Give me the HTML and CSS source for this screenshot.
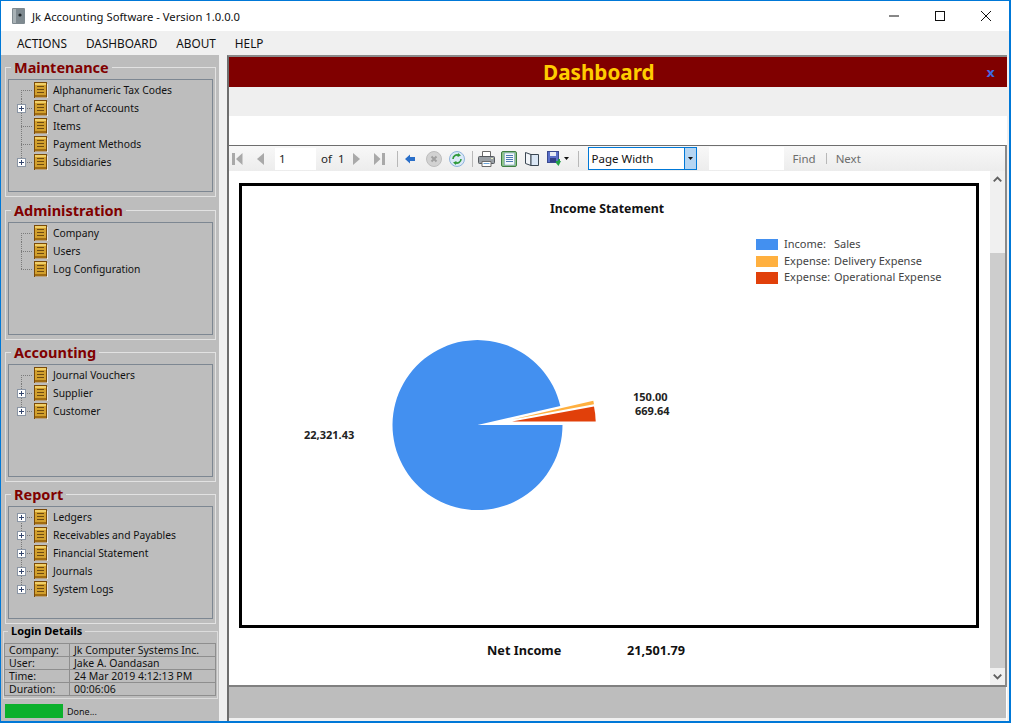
FILE: index.html
```html
<!DOCTYPE html>
<html lang="en">
<head>
    <meta charset="UTF-8">
    <meta name="viewport" content="width=device-width, initial-scale=1.0">
    <title>Jk Accounting Software</title>
    <link rel="stylesheet" href="styles.css">
</head>
<body>
    <svg class="defs" width="0" height="0">
        <symbol id="drawer" viewBox="0 0 14 16">
            <rect x="0.5" y="0.5" width="12" height="15" fill="#d2a02e" stroke="#7a4a08"/>
            <rect x="1" y="1" width="11" height="2" fill="#f0cf68"/>
            <rect x="1" y="13" width="11" height="2" fill="#a06c12"/>
            <path d="M3 4.500h7M3 7.500h7M3 10.500h7" stroke="#6e4a10" stroke-width="1.200"/>
            <path d="M13.500 2v14M1 15.700h13" stroke="#fff" stroke-width="0.600"/>
        </symbol>
    </svg>

    <div class="window">
        <div class="titlebar">
            <svg class="app-icon" width="14" height="16" viewBox="0 0 14 16">
                <rect width="13" height="16" rx="1" fill="#7f8a90"/>
                <rect x="1" y="1" width="3" height="14" fill="#a9b2b6"/>
                <circle cx="8" cy="7" r="1.600" fill="#1d2326"/>
            </svg>
            <span class="app-title">Jk Accounting Software - Version 1.0.0.0</span>
            <div class="win-buttons">
                <svg width="46" height="30" viewBox="0 0 46 30"><path d="M18 15h10" stroke="#111"/></svg>
                <svg width="46" height="30" viewBox="0 0 46 30"><rect x="18.500" y="10.500" width="9" height="9" fill="none" stroke="#111"/></svg>
                <svg width="46" height="30" viewBox="0 0 46 30"><path d="M18 10l10 10M28 10l-10 10" stroke="#111"/></svg>
            </div>
        </div>

        <nav class="menubar">
            <span>ACTIONS</span>
            <span>DASHBOARD</span>
            <span>ABOUT</span>
            <span>HELP</span>
        </nav>

        <div class="content">
            <aside class="sidebar">
                <fieldset class="group">
                    <legend>Maintenance</legend>
                    <ul class="tree">
                        <li class="first"><span class="gutter"></span><svg class="drawer"><use href="#drawer"/></svg>Alphanumeric Tax Codes</li>
                        <li><span class="gutter"><i class="plus"></i></span><svg class="drawer"><use href="#drawer"/></svg>Chart of Accounts</li>
                        <li><span class="gutter"></span><svg class="drawer"><use href="#drawer"/></svg>Items</li>
                        <li><span class="gutter"></span><svg class="drawer"><use href="#drawer"/></svg>Payment Methods</li>
                        <li class="last"><span class="gutter"><i class="plus"></i></span><svg class="drawer"><use href="#drawer"/></svg>Subsidiaries</li>
                    </ul>
                </fieldset>
                <fieldset class="group">
                    <legend>Administration</legend>
                    <ul class="tree">
                        <li class="first"><span class="gutter"></span><svg class="drawer"><use href="#drawer"/></svg>Company</li>
                        <li><span class="gutter"></span><svg class="drawer"><use href="#drawer"/></svg>Users</li>
                        <li class="last"><span class="gutter"></span><svg class="drawer"><use href="#drawer"/></svg>Log Configuration</li>
                    </ul>
                </fieldset>
                <fieldset class="group">
                    <legend>Accounting</legend>
                    <ul class="tree">
                        <li class="first"><span class="gutter"></span><svg class="drawer"><use href="#drawer"/></svg>Journal Vouchers</li>
                        <li><span class="gutter"><i class="plus"></i></span><svg class="drawer"><use href="#drawer"/></svg>Supplier</li>
                        <li class="last"><span class="gutter"><i class="plus"></i></span><svg class="drawer"><use href="#drawer"/></svg>Customer</li>
                    </ul>
                </fieldset>
                <fieldset class="group">
                    <legend>Report</legend>
                    <ul class="tree">
                        <li class="first"><span class="gutter"><i class="plus"></i></span><svg class="drawer"><use href="#drawer"/></svg>Ledgers</li>
                        <li><span class="gutter"><i class="plus"></i></span><svg class="drawer"><use href="#drawer"/></svg>Receivables and Payables</li>
                        <li><span class="gutter"><i class="plus"></i></span><svg class="drawer"><use href="#drawer"/></svg>Financial Statement</li>
                        <li><span class="gutter"><i class="plus"></i></span><svg class="drawer"><use href="#drawer"/></svg>Journals</li>
                        <li class="last"><span class="gutter"><i class="plus"></i></span><svg class="drawer"><use href="#drawer"/></svg>System Logs</li>
                    </ul>
                </fieldset>

                <fieldset class="login">
                    <legend>Login Details</legend>
                    <table>
                        <tr><td>Company:</td><td>Jk Computer Systems Inc.</td></tr>
                        <tr><td>User:</td><td>Jake A. Oandasan</td></tr>
                        <tr><td>Time:</td><td>24 Mar 2019 4:12:13 PM</td></tr>
                        <tr><td>Duration:</td><td>00:06:06</td></tr>
                    </table>
                </fieldset>

                <div class="progress">
                    <div class="progress-bar"></div>
                    <span>Done...</span>
                </div>
            </aside>

            <main class="main">
                <div class="dash-head">
                    <h1>Dashboard</h1>
                    <span class="dash-close">x</span>
                </div>
                <div class="dash-strip"></div>
                <div class="dash-gap"></div>

                <div class="viewer">
                    <div class="toolbar">
                        <svg class="t-first" width="11" height="14" viewBox="0 0 11 14"><path d="M0 1h3v12H0zM10.500 1v12L4 7z" fill="#a9a9a9"/></svg>
                        <svg class="t-prev" width="7" height="14" viewBox="0 0 7 14"><path d="M7 1v12L0 7z" fill="#a9a9a9"/></svg>
                        <span class="page-input">1</span>
                        <span class="page-of">of</span>
                        <span class="page-total">1</span>
                        <svg class="t-next" width="7" height="14" viewBox="0 0 7 14"><path d="M0 1v12L7 7z" fill="#a9a9a9"/></svg>
                        <svg class="t-last" width="11" height="14" viewBox="0 0 11 14"><path d="M0 1v12l6.500-6zM8 1h3v12H8z" fill="#a9a9a9"/></svg>
                        <span class="sep s1"></span>
                        <svg class="t-back" width="10" height="10" viewBox="0 0 10 10"><path d="M0 5l5-4.500V3h5v4H5v2.500z" fill="#2a6fc9"/></svg>
                        <svg class="t-stop" width="16" height="16" viewBox="0 0 16 16"><circle cx="8" cy="8" r="7.500" fill="#d2d2d2" stroke="#bdbdbd"/><path d="M5.500 5.500l5 5M10.500 5.500l-5 5" stroke="#a0a0a0" stroke-width="2"/></svg>
                        <svg class="t-refresh" width="16" height="16" viewBox="0 0 16 16"><circle cx="8" cy="8" r="7.500" fill="#dbe9f8" stroke="#8fb3dc"/><path d="M4 8a4 4 0 0 1 6-3.500" fill="none" stroke="#2f9a3a" stroke-width="1.600"/><path d="M9 2l3 2.500-3.500 1.500z" fill="#2f9a3a"/><path d="M12 8a4 4 0 0 1-6 3.500" fill="none" stroke="#2f9a3a" stroke-width="1.600"/><path d="M7 14l-3-2.500 3.500-1.500z" fill="#2f9a3a"/></svg>
                        <span class="sep s2"></span>
                        <svg class="t-print" width="17" height="16" viewBox="0 0 17 16"><path d="M4.500.5h8v5h-8z" fill="#fff" stroke="#6b6b6b"/><rect x=".5" y="5.500" width="16" height="7" rx="1" fill="#9aa0a6" stroke="#55595e"/><path d="M4 10.500h9v5H4z" fill="#fff" stroke="#6b6b6b"/><path d="M5.500 12.500h6" stroke="#6aa4d8"/><rect x="13" y="7" width="2" height="1" fill="#e8f0c0"/></svg>
                        <svg class="t-layout" width="16" height="16" viewBox="0 0 16 16"><rect x=".5" y=".5" width="15" height="15" rx="1.500" fill="#8fc48c" stroke="#3f7f42"/><rect x="3.500" y="2" width="10" height="12" fill="#f4f8fc" stroke="#7d9fc0" stroke-width=".6"/><path d="M5 4.500h7M5 6.500h7M5 8.500h7M5 10.500h7" stroke="#4d79b3"/></svg>
                        <svg class="t-book" width="15" height="14" viewBox="0 0 15 14"><path d="M7 2.500L1.500.5v11L7 13.500z" fill="#f2f5f9" stroke="#3a4652"/><path d="M7 2.500h7.500v11H7z" fill="#dbe7f5" stroke="#3a4652"/></svg>
                        <svg class="t-save" width="14" height="16" viewBox="0 0 14 16"><rect x=".5" y=".5" width="11" height="11" fill="#5a6fc9" stroke="#3a4a90"/><rect x="3" y="1" width="6" height="4" fill="#e8ecf5"/><rect x="3" y="7" width="6" height="4" fill="#323f86"/><path d="M9 10h2V8h2v2h1l-2.500 5L9 12z" fill="#22a045"/></svg>
                        <svg class="t-caret" width="5" height="3" viewBox="0 0 5 3"><path d="M0 0h5L2.500 3z" fill="#111"/></svg>
                        <span class="sep s3"></span>
                        <div class="combo">
                            <span class="combo-text">Page Width</span>
                            <span class="combo-btn"><svg width="5" height="3" viewBox="0 0 5 3"><path d="M0 0h5L2.500 3z" fill="#111"/></svg></span>
                        </div>
                        <span class="find-input"></span>
                        <span class="find-link">Find</span>
                        <span class="sep s4"></span>
                        <span class="find-link">Next</span>
                    </div>

                    <div class="report-area">
                        <div class="report-page">
                            <div class="report-box">
                                <svg class="chart" width="734" height="439" viewBox="242 186 734 439">
                                    <text x="607" y="213" class="c-title" text-anchor="middle">Income Statement</text>

                                    <rect x="756" y="239" width="22" height="11" fill="#4390f0"/>
                                    <rect x="756" y="256" width="22" height="11" fill="#ffb03f"/>
                                    <rect x="756" y="272" width="22" height="12" fill="#e1400a"/>
                                    <text x="784" y="248" class="c-legend">Income:</text>
                                    <text x="834" y="248" class="c-legend">Sales</text>
                                    <text x="784" y="265" class="c-legend">Expense:</text>
                                    <text x="834" y="265" class="c-legend">Delivery Expense</text>
                                    <text x="784" y="281" class="c-legend">Expense:</text>
                                    <text x="834" y="281" class="c-legend">Operational Expense</text>

                                    <path d="M477.500 425H562.500A85 85 0 1 1 560.300 405.900Z" fill="#4390f0"/>
                                    <path d="M512 419.500L594 404.200L593.300 400.800Z" fill="#ffb03f"/>
                                    <path d="M512 421.500H595.700A83 83 0 0 0 594 406.500Z" fill="#e1400a"/>

                                    <text x="304" y="439" class="c-value">22,321.43</text>
                                    <text x="633" y="401" class="c-value">150.00</text>
                                    <text x="635" y="415" class="c-value">669.64</text>
                                </svg>
                            </div>
                            <div class="net-income">
                                <span class="net-label">Net Income</span>
                                <span class="net-value">21,501.79</span>
                            </div>
                        </div>
                        <div class="scrollbar">
                            <svg class="scroll-arrow" width="15" height="17" viewBox="0 0 16 17"><path d="M4 10.500l4-4 4 4" fill="none" stroke="#606060" stroke-width="2"/></svg>
                            <div class="scroll-space"></div>
                            <div class="scroll-thumb"></div>
                            <svg class="scroll-arrow" width="15" height="17" viewBox="0 0 16 17"><path d="M4 6.500l4 4 4-4" fill="none" stroke="#606060" stroke-width="2"/></svg>
                        </div>
                    </div>
                </div>

                <div class="statusbar"></div>
            </main>
        </div>
    </div>
</body>
</html>
```

FILE: styles.css
```css
* {
    box-sizing: border-box;
}
html, body {
    margin: 0;
    padding: 0;
    height: 100%;
    overflow: hidden;
}
body {
    font-family: "Noto Sans", "Liberation Sans", sans-serif;
    font-size: 10.3px;
    color: #111;
    background-color: #f0f0f0;
}
.defs {
    display: block;
    height: 0;
}
.window {
    display: flex;
    flex-direction: column;
    height: 723px;
    border: 1px solid #0078d7;
    border-width: 1px 2px 2px 1px;
    background-color: #f0f0f0;
}

/* title bar */
.titlebar {
    display: flex;
    align-items: center;
    height: 30px;
    padding-left: 11px;
    background-color: #fff;
}
.app-icon {
    margin-right: 6px;
}
.app-title {
    font-size: 11.25px;
}
.win-buttons {
    display: flex;
    margin-left: auto;
}
.menubar {
    display: flex;
    gap: 19px;
    align-items: center;
    height: 24px;
    padding-left: 16px;
    font-size: 11.8px;
}

.content {
    flex: 1;
    display: flex;
    min-height: 0;
}

/* left side */
.sidebar {
    width: 218px;
    padding-top: 2px;
    background-color: #bdbdbd;
}
.group {
    height: 140px;
    margin: 0 3px 2px 4px;
    padding: 2px 2px 0;
    border: 1px solid #e2e2e2;
}
.group:first-child {
    margin-bottom: 3px;
}
.group legend {
    margin-left: 3px;
    padding: 0 3px;
    height: 20px;
    font-size: 14.5px;
    line-height: 20px;
    font-weight: bold;
    color: #800000;
}
.tree {
    list-style: none;
    height: 113px;
    margin: 0;
    padding: 1px 0 0 0;
    border: 1px solid #7d8792;
}
.tree li {
    display: flex;
    align-items: center;
    height: 18px;
}
.gutter {
    display: flex;
    align-items: center;
    justify-content: center;
    width: 25px;
    height: 18px;
    padding: 0 4px;
    background-image: repeating-linear-gradient(#7a7a7a 0 1px, transparent 1px 2px), repeating-linear-gradient(90deg, #7a7a7a 0 1px, transparent 1px 2px);
    background-size: 1px 18px, 12px 1px;
    background-repeat: no-repeat;
    background-position: 12px 0, 12px 9px;
}
.first .gutter {
    background-size: 1px 9px, 12px 1px;
    background-position: 12px 9px, 12px 9px;
}
.last .gutter {
    background-size: 1px 9px, 12px 1px;
    background-position: 12px 0, 12px 9px;
}
.plus {
    display: block;
    width: 9px;
    height: 9px;
    border: 1px solid #8b96a5;
    background: linear-gradient(#34466e, #34466e) center / 5px 1px no-repeat, linear-gradient(#34466e, #34466e) center / 1px 5px no-repeat, #fff;
}
.drawer {
    width: 14px;
    height: 16px;
    margin-right: 5px;
}

.login {
    width: 215px;
    height: 75px;
    margin: -2px 0 0 2px;
    padding: 5px 0 0 0;
    border: 1px solid #dcdcdc;
}
.login legend {
    margin-left: 4px;
    padding: 0 3px;
    height: 14px;
    font-size: 11px;
    line-height: 14px;
    font-weight: bold;
    color: #000;
}
.login table {
    width: 212px;
    border-collapse: collapse;
    border: 1px solid #8e8e8e;
    font-size: 10.5px;
}
.login td {
    height: 13px;
    padding: 0 0 0 4px;
    border: 1px solid #8e8e8e;
    line-height: 11px;
}
.login td:first-child {
    width: 65px;
}
.progress {
    display: flex;
    align-items: center;
    gap: 4px;
    margin: 5px 0 0 4px;
    font-size: 9px;
}
.progress-bar {
    width: 58px;
    height: 14px;
    background-color: #0bb02c;
}

/* right side */
.main {
    flex: 1;
    display: flex;
    flex-direction: column;
    margin-left: 8px;
    margin-right: 2px;
    border-top: 2px solid #8a8a8a;
    border-left: 2px solid #6e6e6e;
    background-color: #fff;
}
.dash-head {
    display: flex;
    align-items: center;
    justify-content: space-between;
    height: 30px;
    padding: 0 12px 0 314px;
    background-color: #800000;
}
.dash-head h1 {
    margin: 0;
    font-size: 20.7px;
    color: #ffcc00;
}
.dash-close {
    font-family: "DejaVu Sans", sans-serif;
    font-size: 13px;
    font-weight: bold;
    color: #4169e1;
}
.dash-strip {
    height: 29px;
    background-color: #efefef;
}
.dash-gap {
    height: 29px;
    background-color: #fff;
}
.viewer {
    flex: 1;
    display: flex;
    flex-direction: column;
    min-height: 0;
    border-top: 1px solid #6e6e6e;
    border-right: 2px solid #8a8a8a;
    border-bottom: 2px solid #808080;
}
.toolbar {
    display: flex;
    align-items: center;
    flex: none;
    height: 25px;
    padding-left: 3px;
    background: linear-gradient(#f8f8f8, #ececec);
    font-size: 11.5px;
}
.t-prev { margin-left: 14px; }
.page-input {
    width: 41px;
    height: 22px;
    margin-left: 11px;
    padding-left: 4px;
    line-height: 21px;
    background-color: #fff;
    color: #222;
}
.page-of { margin-left: 5px; color: #222; }
.page-total { margin-left: 6px; color: #222; }
.t-next { margin-left: 8px; }
.t-last { margin-left: 14px; }
.sep {
    width: 1px;
    height: 16px;
    background-color: #b8b8b8;
}
.s1 { margin-left: 12px; }
.t-back { margin-left: 7px; }
.t-stop { margin-left: 11px; }
.t-refresh { margin-left: 7px; }
.s2 { margin-left: 7px; }
.t-print { margin-left: 5px; }
.t-layout { margin-left: 6px; }
.t-book { margin-left: 7px; }
.t-save { margin-left: 8px; }
.t-caret { margin-left: 3px; }
.s3 { margin-left: 9px; }
.combo {
    display: flex;
    width: 109px;
    height: 23px;
    margin-left: 9px;
    border: 1px solid #0078d7;
    background-color: #fff;
}
.combo-text {
    flex: 1;
    padding-left: 3px;
    line-height: 21px;
    color: #111;
}
.combo-btn {
    display: flex;
    align-items: center;
    justify-content: center;
    width: 12px;
    border-left: 1px solid #0078d7;
    background-color: #b5d5f2;
}
.find-input {
    width: 75px;
    height: 23px;
    margin-left: 12px;
    background-color: #fff;
}
.find-link {
    color: #6d6d6d;
}
.find-input + .find-link { margin-left: 9px; }
.s4 { height: 11px; margin: 0 9px 0 10px; }

.report-area {
    flex: 1;
    display: flex;
    min-height: 0;
    background-color: #fff;
}
.report-page {
    flex: 1;
    padding: 12px 11px 0 10px;
}
.report-box {
    height: 445px;
    border: 3px solid #000;
}
.chart {
    display: block;
}
.chart text {
    font-family: "Noto Sans", "Liberation Sans", sans-serif;
}
.c-title {
    font-size: 12.3px;
    font-weight: bold;
    fill: #111;
}
.c-legend {
    font-size: 11px;
    fill: #444;
}
.c-value {
    font-size: 11px;
    font-weight: bold;
    fill: #222;
}
.net-income {
    display: flex;
    margin-top: 13px;
    padding-left: 248px;
    font-size: 12.7px;
    font-weight: bold;
    color: #111;
}
.net-label { width: 140px; }

.scrollbar {
    display: flex;
    flex-direction: column;
    flex: none;
    width: 15px;
    background-color: #f0f0f0;
}
.scroll-arrow { flex: none; display: block; }
.scroll-space { height: 65px; flex: none; }
.scroll-thumb { flex: 1; background-color: #cdcdcd; }
.statusbar {
    height: 34px;
    margin-right: 1px;
    background-color: #bdbdbd;
    border-bottom: 3px solid #f0f0f0;
}
```
